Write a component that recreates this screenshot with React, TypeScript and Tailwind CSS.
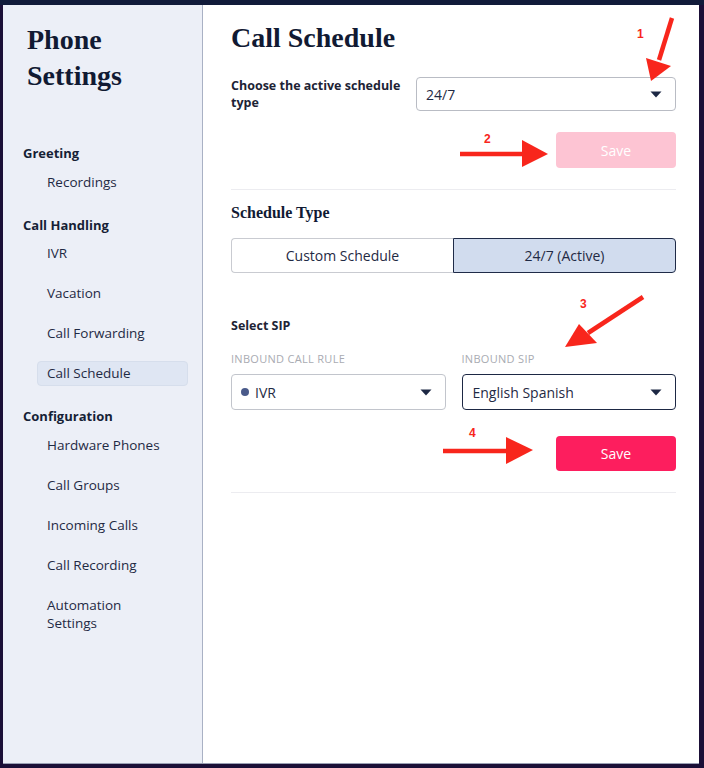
import React from 'react';

const sans = { fontFamily: '"Open Sans", "Liberation Sans", sans-serif' };
const serif = { fontFamily: '"Liberation Serif", "DejaVu Serif", serif' };

type NavGroup = { title: string; items: string[]; gap: string };

const groups: NavGroup[] = [
  { title: 'Greeting', items: ['Recordings'], gap: 'mt-[7px]' },
  { title: 'Call Handling', items: ['IVR', 'Vacation', 'Call Forwarding', 'Call Schedule'], gap: 'mt-[6px]' },
  { title: 'Configuration', items: ['Hardware Phones', 'Call Groups', 'Incoming Calls', 'Call Recording', 'Automation Settings'], gap: 'mt-[7px]' },
];

function Caret() {
  return (
    <svg width="12" height="7" viewBox="0 0 12 7" className="shrink-0">
      <path d="M0.5 0.5 L11.5 0.5 L6 6.5 Z" fill="#1d2844" />
    </svg>
  );
}

function Sidebar() {
  return (
    <aside className="w-[200px] shrink-0 bg-[#eceff7] border-r border-[#a9b1c4] pt-[17px]" style={sans}>
      <h1 className="pl-[24px] text-[28px] leading-[36px] font-bold text-[#111a33]" style={serif}>
        Phone
        <br />
        Settings
      </h1>
      <nav className="mt-[49px] flex flex-col gap-[20px] pl-[20px] pr-[14px]">
        {groups.map(g => (
          <div key={g.title}>
            <div className="text-[13px] leading-[20px] font-bold text-[#161f36]">{g.title}</div>
            <ul className={`${g.gap} ml-[14px] flex flex-col gap-[15px]`}>
              {g.items.map(item => {
                const active = item === 'Call Schedule';
                const auto = item === 'Automation Settings';
                return (
                  <li
                    key={item}
                    className={`flex items-center px-[9px] rounded-[4px] text-[13.5px] text-[#1f2a44] ${
                      auto ? 'leading-[18px] py-[2px]' : 'h-[25px]'
                    } ${active ? 'bg-[#dfe6f3] border border-[#d6deec]' : 'border border-transparent'}`}
                  >
                    {auto ? (
                      <span>
                        Automation
                        <br />
                        Settings
                      </span>
                    ) : (
                      item
                    )}
                  </li>
                );
              })}
            </ul>
          </div>
        ))}
      </nav>
    </aside>
  );
}

function Annotations() {
  const red = '#f8261c';
  return (
    <svg className="absolute inset-0 pointer-events-none" width="704" height="768" viewBox="0 0 704 768">
      <g fill={red} stroke="none">
        <line x1="672" y1="18" x2="659" y2="60" stroke={red} strokeWidth="4.5" />
        <polygon points="646,58 671,66 651,81" />
        <line x1="460" y1="154" x2="524" y2="154" stroke={red} strokeWidth="4.5" />
        <polygon points="522,140 548,154 522,167" />
        <line x1="643" y1="297" x2="588" y2="333" stroke={red} strokeWidth="4.5" />
        <polygon points="579,324 597,343 565,347" />
        <line x1="443" y1="451" x2="508" y2="451" stroke={red} strokeWidth="4.5" />
        <polygon points="506,437 533,450 506,464" />
      </g>
      <g fill={red} fontFamily="Liberation Sans, Arial, sans-serif" fontWeight="700" fontSize="12">
        <text x="637" y="38">1</text>
        <text x="484" y="143">2</text>
        <text x="580" y="308">3</text>
        <text x="469" y="437">4</text>
      </g>
    </svg>
  );
}

export default function App() {
  return (
    <div className="relative w-[704px] h-[768px] bg-[#1b0f37] overflow-hidden">
      <div className="h-[5px] bg-[#111b3a]" />
      <div className="flex h-[759px] ml-[3px] mr-[5px] border-b border-[#9aa0b4]">
        <Sidebar />
        <main className="flex-1 bg-white pl-[28px] pr-[23px] pt-[15px]" style={sans}>
          <h2 className="text-[28px] leading-[36px] font-bold text-[#111a33]" style={serif}>
            Call Schedule
          </h2>

          <div className="mt-[21px] flex items-start gap-[10px]">
            <label className="w-[175px] text-[12.5px] leading-[17px] font-bold text-[#1d2335]">
              Choose the active schedule type
            </label>
            <div className="flex-1 h-[34px] border border-[#b9bcc4] rounded-[4px] flex items-center justify-between pl-[9px] pr-[13px] text-[14px] text-[#1f2a44]">
              <span>24/7</span>
              <Caret />
            </div>
          </div>

          <div className="mt-[21px] flex justify-end">
            <button className="w-[120px] h-[36px] rounded-[4px] bg-[#fdc4d3] text-white text-[14px]">Save</button>
          </div>

          <div className="mt-[21px] border-t border-[#ececf0]" />

          <h3 className="mt-[11px] text-[16px] leading-[24px] font-bold text-[#111a33]" style={serif}>
            Schedule Type
          </h3>

          <div className="mt-[13px] flex h-[35px] text-[14px] text-[#1f2a44]">
            <button className="flex-1 border border-[#c9cbd1] border-r-0 rounded-l-[4px] bg-white">Custom Schedule</button>
            <button className="flex-1 border border-[#1f2b48] rounded-r-[4px] bg-[#d1dcee]">24/7 (Active)</button>
          </div>

          <div className="mt-[45px] text-[12.5px] leading-[16px] font-bold text-[#1d2335]">Select SIP</div>

          <div className="mt-[18px] flex gap-[16px]">
            <div className="flex-1">
              <div className="text-[11px] leading-[14px] tracking-[0.3px] text-[#a9abb2]">INBOUND CALL RULE</div>
              <div className="mt-[8px] h-[36px] border border-[#c2c5cc] rounded-[4px] flex items-center justify-between pl-[9px] pr-[13px] text-[14px] text-[#1f2a44]">
                <span className="flex items-center gap-[6px]">
                  <span className="w-[8px] h-[8px] rounded-full bg-[#4a5a8a]" />
                  IVR
                </span>
                <Caret />
              </div>
            </div>
            <div className="flex-1">
              <div className="text-[11px] leading-[14px] tracking-[0.3px] text-[#a9abb2]">INBOUND SIP</div>
              <div className="mt-[8px] h-[36px] border border-[#1d2844] rounded-[4px] flex items-center justify-between pl-[10px] pr-[13px] text-[14px] text-[#1f2a44]">
                <span>English Spanish</span>
                <Caret />
              </div>
            </div>
          </div>

          <div className="mt-[26px] flex justify-end">
            <button className="w-[120px] h-[35px] rounded-[4px] bg-[#fd1e5e] text-white text-[14px]">Save</button>
          </div>

          <div className="mt-[21px] border-t border-[#ececf0]" />
        </main>
      </div>
      <Annotations />
    </div>
  );
}
